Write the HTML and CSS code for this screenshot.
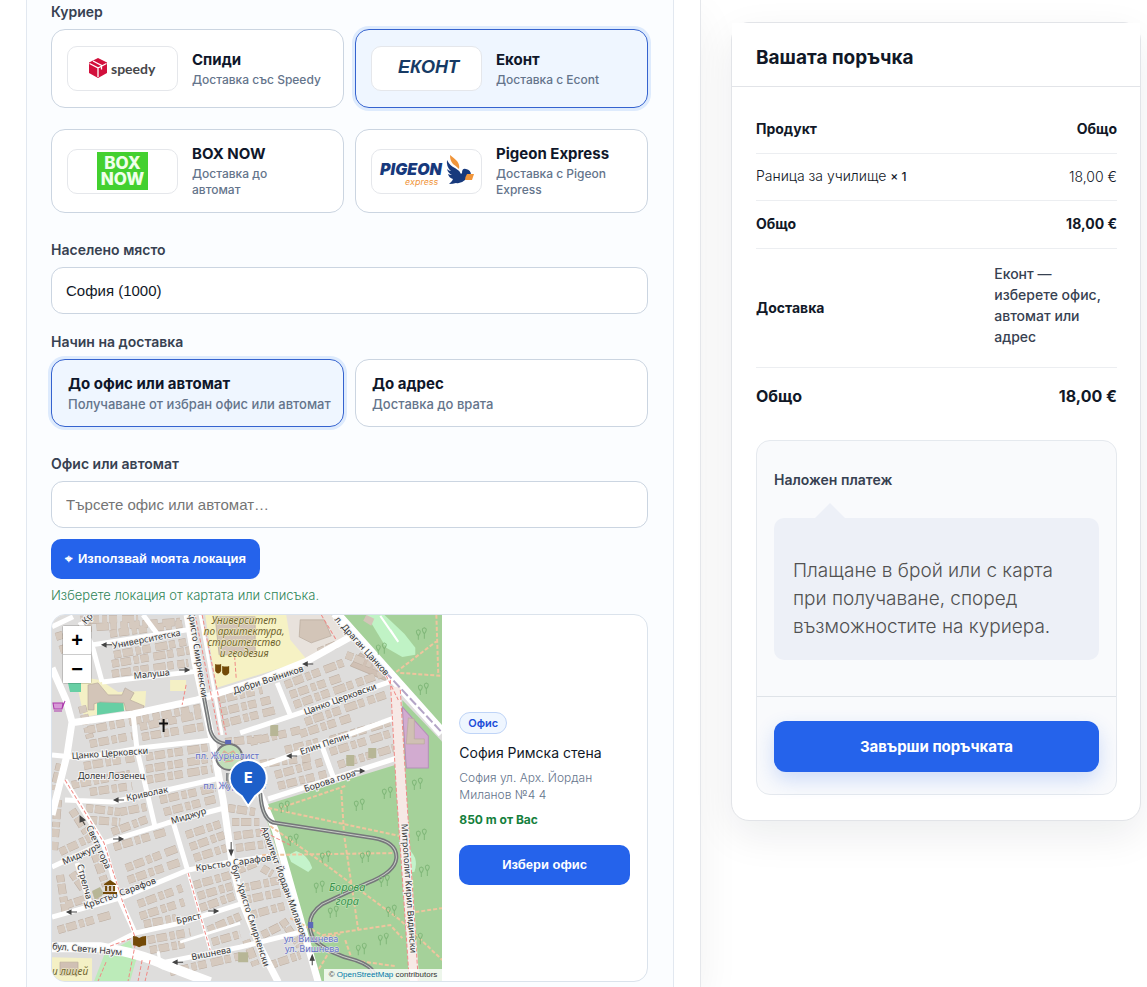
FILE: index.html
```html
<!DOCTYPE html>
<html lang="bg">
<head>
<meta charset="utf-8">
<meta name="viewport" content="width=device-width, initial-scale=1">
<title>Поръчка</title>
<link rel="stylesheet" href="styles.css">
</head>
<body>
<main class="checkout">
  <section class="details">
    <form class="panel">
      <fieldset class="group">
        <legend class="label">Куриер</legend>
        <div class="options options-couriers">
          <label class="option">
            <input class="option-input" type="radio" name="courier">
            <span class="logo">
              <svg width="70" height="24" viewBox="0 0 70 24" aria-hidden="true">
                <path d="M10 1l9 4.500v10.500l-9 5-9-5v-10.500z" fill="#d2103c"/>
                <path d="M1.500 6.500l8.500 4.500v9M10 11l8.500-4.500M5 4l8.500 4.500v4" fill="none" stroke="#fff" stroke-width="1.300"/>
                <text x="23" y="17" class="logo-speedy">speedy</text>
              </svg>
            </span>
            <span class="option-text"><span class="option-title">Спиди</span><span class="option-note">Доставка със Speedy</span></span>
          </label>
          <label class="option">
            <input class="option-input" type="radio" name="courier" checked>
            <span class="logo"><span class="logo-econt">ЕКОНТ</span></span>
            <span class="option-text"><span class="option-title">Еконт</span><span class="option-note">Доставка с Econt</span></span>
          </label>
          <label class="option">
            <input class="option-input" type="radio" name="courier">
            <span class="logo"><span class="logo-boxnow">BOX<br>NOW</span></span>
            <span class="option-text"><span class="option-title">BOX NOW</span><span class="option-note">Доставка до<br>автомат</span></span>
          </label>
          <label class="option">
            <input class="option-input" type="radio" name="courier">
            <span class="logo">
              <svg width="96" height="34" viewBox="0 0 96 34" aria-hidden="true">
                <text x="1" y="21" class="logo-pigeon">PIGEON</text>
                <text x="26" y="31" class="logo-express">express</text>
                <path d="M71 1q4 3 7 6 3 4 2 8-3-3-6-5-3-3-3-9z" fill="#f0953a"/>
                <path d="M68 6q3 6 8 8 4 2 6 6l1-1q0-5 4-4 5 1 5 6-4 2-6 5-4 4-9 3-3 1-7 1l3-3 1-2q-4-1-5-5 2 1 4 1-4-2-5-6 2 2 4 2-5-4-4-11z" fill="#17397c"/>
                <path d="M88 20l7 0-2 6-7 0q0-3 2-6z" fill="#f0953a"/>
              </svg>
            </span>
            <span class="option-text"><span class="option-title">Pigeon Express</span><span class="option-note">Доставка с Pigeon Express</span></span>
          </label>
        </div>
      </fieldset>

      <div class="group">
        <label class="label" for="city">Населено място</label>
        <input class="field" id="city" type="text" value="София (1000)">
      </div>

      <fieldset class="group group-near">
        <legend class="label">Начин на доставка</legend>
        <div class="options">
          <label class="option option-plain">
            <input class="option-input" type="radio" name="method" checked>
            <span class="option-text"><span class="option-title">До офис или автомат</span><span class="option-note">Получаване от избран офис или автомат</span></span>
          </label>
          <label class="option option-plain">
            <input class="option-input" type="radio" name="method">
            <span class="option-text"><span class="option-title">До адрес</span><span class="option-note">Доставка до врата</span></span>
          </label>
        </div>
      </fieldset>

      <div class="group">
        <label class="label" for="office">Офис или автомат</label>
        <input class="field" id="office" type="text" placeholder="Търсете офис или автомат…">
        <button class="button button-locate" type="button"><span class="locate-mark">⌖</span>Използвай моята локация</button>
        <p class="hint">Изберете локация от картата или списъка.</p>
      </div>

      <div class="picker">
        <div class="map">
          <svg class="map-canvas" viewBox="52 615 390 366" preserveAspectRatio="xMidYMid slice" role="img" aria-label="Карта">
            <defs>
              <path id="buildings" d="M56 637L85 628L180 622M60 650L85 641M80 620L138 619M110 634L182 624M112 664L192 650M114 655L186 642M112 674L188 663M82 706L90 738M88 730L200 708M140 727L204 714M90 744L132 736M142 737L206 726M84 766L134 758M146 757L210 747M146 769L214 758M146 780L212 769M72 785L130 774M90 792L132 786M60 764L54 790M58 800L54 850M72 810L90 838M86 808L120 812M120 812L146 807M90 820L120 822M60 852L90 838M112 832L150 818M114 847L165 832M160 800L215 788M164 812L215 799M60 875L66 915M72 873L84 890M95 855L106 886M66 905L118 888M128 880L180 862M126 868L178 848M186 835L220 824M190 847L224 835M194 858L226 848M58 930L110 915M138 904L182 888M140 916L184 902M144 924L176 918M194 885L230 875M198 896L232 886M200 908L234 896M148 940L190 932M150 950L184 944M208 930L240 916M212 942L240 934M170 972L240 956M246 940L256 966M238 870L258 862M242 888L280 880M244 900L282 892M250 915L284 906M262 935L284 924M270 965L300 955M262 868L272 874M282 920L300 946M228 808L255 812M232 822L260 822M234 836L264 832M236 848L266 844M218 700L262 690M220 712L270 700M222 724L276 710M285 685L345 662M294 705L382 674M290 695L340 678M346 655L380 668M225 742L268 738M250 742L300 730M305 722L385 695M300 734L350 718M285 750L318 742M330 740L390 722M330 752L392 733M338 765L394 748M275 775L322 762M278 786L326 774M260 764L310 758M318 652L338 644"/>
            </defs>
            <rect x="52" y="615" width="390" height="366" fill="#dedddc"/>
            <path d="M334 615H442V733Z" fill="#a5d19a"/>
            <path d="M262 806L398 764L442 742V981H320Z" fill="#a5d19a"/>
            <path d="M402 700L442 742V981H410Z" fill="#a5d19a"/>
            <path d="M205 615H330L346 636L306 660L216 688Z" fill="#f6f2c4"/>
            <path d="M286 615H330L346 636L307 660L290 640Z" fill="#e8e2dc"/>
            <path d="M75 676L100 680L118 692L146 691L145 706L84 717Z" fill="#f4f0c5"/>
            <path d="M170 680H186V691H170Z" fill="#f4f0c5"/>
            <path d="M97 702L123 699L124 711L97 715ZM68 683H81V692H70Z" fill="#67cfa4"/>
            <path d="M366 615H384L404 634L415 648L415 655L402 657L386 648Z" fill="#c0f3c5"/>
            <path d="M366 615l8 4-3 7-8-5z" fill="#d3c5b8"/>
            <path d="M380 616l18 26-8-12" fill="none" stroke="#fff" stroke-width="2"/>
            <path d="M402 707L428 736V768H406Z" fill="#d2abd0" stroke="#b48fb8"/>
            <path d="M52 957L92 958V981H52Z" fill="#f4f0c5"/>
            <path d="M104 955L130 940L136 960L130 981H94Z" fill="#bcebb9"/>
            <path d="M288 855L296 851Q308 855 312 868L308 872L291 862Z" fill="#c4f3cb"/>
            <path d="M404 846Q420 856 414 872H406Z" fill="#c4f3cb"/>
            <path d="M88 685l10-2 10 12 14 0 3-7 9 5-4 7 14 6-2 6-16-1-2-8-24-1-6 2v6h-6z M215 617h40v38h-36z M300 620h24l7 16-20 7-12-6z" fill="#d3c5b8" stroke="#b9aa9d" stroke-width=".7"/>
            <path d="M60 962h18v13h-18z M408 718l6 1v20h10v5h-18z M350 666l10-13 20 12 6 16z" fill="#d0c0b4" stroke="#b9aa9d" stroke-width=".7"/>
            <use href="#buildings" class="buildings-edge"/>
            <use href="#buildings" class="buildings"/>
            <path d="M92 891l8-4 4 7-9 6zM270 725h8v11h-8zM346 755h8v11h-8zM368 748h8v10h-8zM238 952h10v10h-10z" fill="#b7b696"/>

            <g class="road">
              <path d="M52 627L73 617M92 645L187 630M102 682L200 671M80 622L92 645L102 682M143 615L157 634M133 714L137 750L155 827M83 758L52 755M83 758L140 748L212 740M240 733L303 712L392 681M277 683L290 715M232 775L270 763L397 717M322 747L333 777M268 799L397 758M65 800L113 802L167 790L220 778M65 780L103 843L120 900L135 933M52 867L103 843L167 823L224 808M173 822L188 872M52 917L123 897L188 870L230 862L277 855M77 863L90 903M107 947L135 933L180 923L243 903M160 963L240 947L300 932"/>
              <path class="road-thin" d="M180 942L240 923M188 873L210 950M200 615L222 735M158 951L160 963"/>
              <path class="road-main" d="M70 723L133 714L197 700L260 680L307 661L352 636M187 615L195 663L212 740L223 800L232 863L240 897L260 947L278 982M258 790L275 830L318 982M52 668L66 700L72 722L67 755L52 815"/>
              <path class="road-wide" d="M52 947L100 947Q140 953 165 965L210 982M335 613L442 733"/>
              <path class="road-wide road-pink" d="M395 687L401 790L414 982"/>
            </g>
            <path d="M385 672L442 733" stroke="#b3a5c6" stroke-width="2" stroke-dasharray="9 3" fill="none"/>
            <path class="paths" d="M268 808L400 836M270 826L330 868L400 920L442 960M341 790L344 836L358 930M262 855L394 853M290 918L322 935L390 925L402 938M345 940L352 960L395 966M396 672L438 640M400 673L442 676M436 615L438 676M415 912L442 908M308 940L340 934M345 786L280 808M330 950L318 970"/>
            <path class="foot" d="M390 680L396 790L409 981M400 690L406 790L418 981M195 615L219 735M202 615L226 735M188 873L210 950M321 615L336 640M234 650L236 678M65 780L104 843L122 900L136 940L128 981M142 960L138 981M186 685L182 705M383 670L398 700M260 830L290 845M110 946L132 938M150 960L145 981M106 962L98 981"/>
            <g class="tram">
              <path class="tram-bed" d="M203 693L210 730Q214 744 228 744M228 773V790M260 793Q262 822 276 823L373 838Q397 842 396 858Q395 872 367 883L322 904Q302 918 314 940Q330 954 355 960Q372 966 374 974"/>
              <path class="tram-rail" d="M203 693L210 730Q214 744 228 744M228 773V790M260 793Q262 822 276 823L373 838Q397 842 396 858Q395 872 367 883L322 904Q302 918 314 940Q330 954 355 960Q372 966 374 974"/>
            </g>
            <circle cx="229" cy="757" r="13" fill="#c2dfb9" stroke="#77777a" stroke-width="2"/>
            <path d="M221 756l3-5 4 3 5-3 4 5-5 5-7 1z" fill="#a5d19a" stroke="#e6a294"/>
            <path d="M225 740h6v4h-6zM308 922h5v6h-5z" fill="#5b68b8"/>

            <g class="trees">
              <path id="tree" d="M378 651q-4-5 0-6 4 1 0 6v4M384 649q-4-5 0-6 4 1 0 6v5"/>
              <use href="#tree" x="40" y="-15"/><use href="#tree" x="42" y="40"/><use href="#tree" x="36" y="135"/>
              <use href="#tree" x="-97" y="158"/><use href="#tree" x="-88" y="191"/><use href="#tree" x="-56" y="208"/><use href="#tree" x="-22" y="156"/><use href="#tree" x="6" y="144"/><use href="#tree" x="-16" y="208"/><use href="#tree" x="3" y="232"/><use href="#tree" x="-62" y="238"/><use href="#tree" x="-48" y="263"/><use href="#tree" x="10" y="262"/><use href="#tree" x="2" y="290"/><use href="#tree" x="40" y="186"/><use href="#tree" x="43" y="222"/><use href="#tree" x="36" y="290"/><use href="#tree" x="-20" y="300"/>
            </g>

            <g class="street">
              <text transform="translate(113 649) rotate(-11)">Университетска</text>
              <text transform="translate(134 679) rotate(-6)">Малуша</text>
              <text transform="translate(188 612) rotate(81)">Христо Смирненски</text>
              <text transform="translate(86 625) rotate(-50)">Кр</text>
              <text transform="translate(234 694) rotate(-18)">Добри Войников</text>
              <text transform="translate(305 715) rotate(-20)">Цанко Церковски</text>
              <text transform="translate(301 755) rotate(-19)">Елин Пелин</text>
              <text transform="translate(305 792) rotate(-18)">Борова гора</text>
              <text transform="translate(334 620) rotate(48)">л. Драган Цанков</text>
              <text transform="translate(72 759) rotate(-4)">Цанко Церковски</text>
              <text transform="translate(127 801) rotate(-12)">Криволак</text>
              <text transform="translate(172 824) rotate(-17)">Миджур</text>
              <text transform="translate(86 827) rotate(65)">Света гора</text>
              <text transform="translate(64 865) rotate(-24)">Миджур</text>
              <text transform="translate(77 865) rotate(75)">Стрелча</text>
              <text transform="translate(85 909) rotate(-20)">Кръстьо Сарафов</text>
              <text transform="translate(196 871) rotate(-8)">Кръстьо Сарафов</text>
              <text transform="translate(177 924) rotate(-13)">Бряст</text>
              <text transform="translate(192 960) rotate(-11)">Вишнева</text>
              <text transform="translate(52 949) rotate(5)">бул. Свети Наум</text>
              <text transform="translate(231 866) rotate(72)">бул. Христо Смирненски</text>
              <text transform="translate(261 828) rotate(70)">Архитект Йордан Миланов</text>
              <text transform="translate(401 824) rotate(86)">Митрополит Кирил Видински</text>
              <text x="78" y="779">Долен Лозенец</text>
            </g>
            <g class="arrows">
              <path id="arrow" d="M102 645h10M106 643l-4 2 4 2z"/>
              <use href="#arrow" x="201" y="19"/><use href="#arrow" x="185" y="111"/><use href="#arrow" x="12" y="155"/><use href="#arrow" x="-35" y="267"/><use href="#arrow" x="71" y="317"/>
              <path id="arrow-right" d="M179 670h10M185 668l4 2-4 2z"/>
              <use href="#arrow-right" x="-66" y="169"/><use href="#arrow-right" x="29" y="241"/><use href="#arrow-right" x="175" y="101"/>
              <path d="M231 842v12M229 850l2 5 2-5zM312 965v-10M310 960l2-5 2 5zM85 825l-5-8M80 822v-6l5 4z"/>
            </g>
            <g class="place">
              <text x="244" y="624">Университет</text><text x="244" y="635">по архитектура,</text><text x="244" y="646">строителство</text><text x="244" y="657">и геодезия</text>
              <text x="70" y="975">и лицей</text>
            </g>
            <g class="park"><text x="347" y="891">Борова</text><text x="347" y="905">гора</text></g>
            <g class="stop"><text x="227" y="759">пл. Журналист</text><text x="235" y="789">пл. Журналист</text><text x="311" y="942">ул. Вишнева</text><text x="312" y="952">ул. Вишнева</text></g>
            <path d="M163.500 719v13M159 723.500h9" stroke="#111" stroke-width="2" fill="none"/>
            <path d="M215 664q3 1 6 0v7q-3 5-6 0zM222 666q4 1 7 0v7q-4 5-7 0zM104 884l6-4 6 4v1h-12zM105 886h2v5h-2zM109 886h2v5h-2zM113 886h2v5h-2zM103 892h14v2h-14zM133 936q4 0 6 2 3-2 7-2v9q-4 0-7 2-3-2-6-2z" fill="#734a08"/>
            <path d="M53 703h10l-1 6h-8zM62 709l3-8M54 711h8" stroke="#ac39ac" stroke-width="1" fill="#d79ad7"/>
            <path d="M241.500 796C235 792 229.500 786 229.500 778.500A18.500 18.500 0 0 1 266.500 778.500C266.500 786 261 792 255 796L248 806Z" fill="#1d5fc9" stroke="#fff" stroke-width="2"/>
            <text x="248" y="783" class="pin">E</text>
          </svg>
          <div class="zoom"><button class="zoom-button" type="button" aria-label="Приближи">+</button><button class="zoom-button" type="button" aria-label="Отдалечи">−</button></div>
          <div class="credit">© <a class="credit-link" href="#">OpenStreetMap</a> contributors</div>
        </div>
        <div class="office">
          <span class="badge">Офис</span>
          <strong class="office-name">София Римска стена</strong>
          <span class="office-address">София ул. Арх. Йордан Миланов №4 4</span>
          <span class="office-distance">850 m от Вас</span>
          <button class="button" type="button">Избери офис</button>
        </div>
      </div>
    </form>
  </section>

  <aside class="order">
    <h2 class="order-title">Вашата поръчка</h2>
    <div class="order-body">
      <table class="totals">
        <thead><tr><th>Продукт</th><th class="amount">Общо</th></tr></thead>
        <tbody>
          <tr class="product"><td>Раница за училище <span class="count">× 1</span></td><td class="amount">18,00 €</td></tr>
          <tr><th>Общо</th><td class="amount strong">18,00 €</td></tr>
          <tr class="shipping"><th>Доставка</th><td class="shipping-value">Еконт — изберете офис, автомат или адрес</td></tr>
          <tr class="grand"><th>Общо</th><td class="amount strong">18,00 €</td></tr>
        </tbody>
      </table>
      <div class="payment">
        <div class="payment-method">
          <p class="payment-label">Наложен платеж</p>
          <p class="payment-note">Плащане в брой или с карта при получаване, според възможностите на куриера.</p>
        </div>
        <div class="payment-action"><button class="button button-order" type="submit">Завърши поръчката</button></div>
      </div>
    </div>
  </aside>
</main>
</body>
</html>
```

FILE: styles.css
```css
* { box-sizing: border-box; }

body {
  margin: 0;
  background: #fff;
  color: #111827;
  font-family: Inter, "Noto Sans", sans-serif;
  font-size: 14px;
  line-height: 20px;
}

.checkout {
  display: grid;
  grid-template-columns: minmax(0, 701fr) minmax(0, 410fr);
  gap: 30px;
  align-items: start;
  min-height: 100vh;
  padding-right: 6px;
  overflow: hidden;
}

.details {
  min-height: 100vh;
  padding: 0 26px;
  border-right: 1px solid #e5e7eb;
  box-shadow: 0 16px 40px rgba(15, 23, 42, .06);
}

.panel {
  min-height: 100vh;
  padding: 2px 25px 4px 24px;
  border: solid #e2e8f0;
  border-width: 0 1px;
  background: #fbfdff;
}

.group { min-width: 0; margin: 0 0 27px; padding: 0; border: 0; }
.group:has(+ .group-near) { margin-bottom: 18px; }
.group:has(+ .picker) { margin-bottom: 9px; }

.label {
  display: block;
  margin: 0 0 7px;
  padding: 0;
  color: #374151;
  font-size: 14px;
  font-weight: 600;
}

.options { display: grid; grid-template-columns: repeat(2, minmax(0, 1fr)); gap: 21px 11px; }

.option {
  display: flex;
  align-items: center;
  gap: 14px;
  min-height: 79px;
  padding: 15px;
  border: 1px solid #cbd5e1;
  border-radius: 14px;
  background: #fff;
}
.options-couriers .option:nth-child(n + 3) { min-height: 84px; padding-block: 13px; }
.option-plain { min-height: 68px; padding: 12px 8px 12px 16px; }
.option:has(:checked) {
  border-color: #3563cf;
  background: #eff6ff;
  box-shadow: 0 0 0 3px #deebfd;
}
.option-input { position: absolute; opacity: 0; }

.option-text { display: flex; flex-direction: column; gap: 2px; min-width: 0; }
.option-title { color: #0f172a; font-size: 15px; font-weight: 700; line-height: 20px; }
.option-note { color: #64748b; font-size: 12px; font-weight: 500; line-height: 16px; }
.option-plain .option-note { font-size: 13px; }

.logo {
  display: flex;
  flex: 0 0 111px;
  align-items: center;
  justify-content: center;
  height: 45px;
  border: 1px solid #e5e7eb;
  border-radius: 10px;
  background: #fff;
}
.logo-speedy { fill: #47474a; font: 700 14px Lato, sans-serif; }
.logo-econt { padding: 0 0 2px 4px; color: #173a64; font: italic 700 18px "Liberation Sans", sans-serif; }
.logo-boxnow {
  width: 51px;
  height: 38px;
  padding-top: 3px;
  background: #43d02f;
  color: #efffea;
  font: 800 17px/16px Inter, sans-serif;
  text-align: center;
}
.logo-pigeon { fill: #17397c; font: italic 900 16px Inter, sans-serif; }
.logo-express { fill: #f0953a; font: italic 400 9px Inter, sans-serif; }

.field {
  display: block;
  width: 100%;
  height: 47px;
  padding: 0 14px;
  border: 1px solid #cbd5e1;
  border-radius: 12px;
  background: #fff;
  color: #111827;
  font: 15px "Liberation Sans", Arial, sans-serif;
}
.field::placeholder { color: #757575; }

.button {
  height: 40px;
  border: 0;
  border-radius: 10px;
  background: #2563eb;
  color: #fff;
  font: 700 13px "Liberation Sans", Arial, sans-serif;
  cursor: pointer;
}
.button-locate { display: block; margin-top: 11px; padding: 0 14px; }
.locate-mark { margin-right: 6px; }

.hint { margin: 6px 0 0; color: #2f8557; font-size: 13px; font-weight: 300; line-height: 20px; }

.picker {
  display: grid;
  grid-template-columns: minmax(0, 391fr) minmax(0, 205fr);
  height: 368px;
  overflow: hidden;
  border: 1px solid #dbe3ec;
  border-radius: 14px;
  background: #fff;
}
.map { position: relative; min-width: 0; height: 366px; overflow: hidden; }
.map-canvas { display: block; width: 100%; height: 100%; }

.road { fill: none; stroke: #fff; stroke-width: 5; stroke-linejoin: round; }
.road-thin { stroke-width: 3; }
.road-main { stroke-width: 7; }
.road-wide { stroke-width: 10; }
.road-pink { stroke: #f7e9e6; }
.buildings, .buildings-edge { fill: none; stroke-dasharray: 7 2 10 3 5 2 8 5 12 2 6 4; }
.buildings { stroke: #d6cabf; stroke-width: 7; }
.buildings-edge { stroke: #bcada1; stroke-width: 8; }
.paths { fill: none; stroke: #efc59e; stroke-width: 2; stroke-dasharray: 4 2; }
.foot { fill: none; stroke: #f08a86; stroke-width: 1; stroke-dasharray: 4 2; }
.tram { fill: none; }
.tram-bed { stroke: #75777a; stroke-width: 4; }
.tram-rail { stroke: #c8cdc7; stroke-width: 1; }
.trees { fill: none; stroke: #80b779; stroke-width: 1; }
.arrows { fill: #444; stroke: #444; stroke-width: 1; }
.street { fill: #333; stroke: #f5f5f5; stroke-width: 2; paint-order: stroke; font: 9px "Noto Sans", sans-serif; }
.place { fill: #6f632f; stroke: #f6f2c4; stroke-width: 1; paint-order: stroke; font: italic 10px "Noto Sans", sans-serif; text-anchor: middle; }
.park { fill: #38914c; stroke: #c5e8bd; stroke-width: 1; paint-order: stroke; font: italic 11px "Noto Sans", sans-serif; text-anchor: middle; }
.stop { fill: #6370c4; stroke: #e9e9ee; stroke-width: 1; paint-order: stroke; font: 9px "Noto Sans", sans-serif; text-anchor: middle; }
.pin { fill: #fff; font: 800 14px Inter, sans-serif; text-anchor: middle; }

.zoom {
  position: absolute;
  top: 11px;
  left: 11px;
  display: grid;
  gap: 1px;
  width: 28px;
  background: #ccc;
  border-radius: 2px;
  box-shadow: 0 0 0 1px rgba(0, 0, 0, .15);
}
.zoom-button { height: 28px; padding: 0; border: 0; background: #fff; color: #000; font: 700 20px/28px "Liberation Sans", sans-serif; }

.credit {
  position: absolute;
  right: 0;
  bottom: 0;
  padding: 0 5px;
  background: rgba(255, 255, 255, .8);
  color: #333;
  font: 8px/12px "Liberation Sans", sans-serif;
}
.credit-link { color: #0078a8; text-decoration: none; }

.office { display: flex; flex-direction: column; justify-content: center; align-items: flex-start; padding: 0 17px; }
.badge {
  padding: 0 8px;
  border: 1px solid #bfd4f7;
  border-radius: 11px;
  background: #eff6ff;
  color: #1d4ed8;
  font-size: 11px;
  font-weight: 600;
}
.office-name { margin-top: 9px; font-size: 14px; font-weight: 400; }
.office-address { margin-top: 6px; color: #64748b; font-size: 12px; font-weight: 300; line-height: 17px; }
.office-distance { margin-top: 7px; color: #15803d; font-size: 12px; font-weight: 700; }
.office .button { width: 100%; margin-top: 15px; }

.order {
  margin-top: 22px;
  border: 1px solid #e2e4e8;
  border-radius: 18px;
  background: #fff;
  box-shadow: 0 14px 40px rgba(15, 23, 42, .08);
}
.order-title {
  margin: 0;
  padding: 23px 24px 16px;
  border-bottom: 1px solid #e2e4e8;
  background: #fff;
  font-size: 19px;
  font-weight: 700;
  line-height: 24px;
}
.order-body { padding: 18px 23px 25px 24px; }

.totals { width: 100%; table-layout: fixed; border-collapse: collapse; }
.totals th, .totals td { height: 48px; padding: 0; border-bottom: 1px solid #eceef1; text-align: left; vertical-align: middle; }
.totals th { width: 66%; font-weight: 700; }
.totals th.amount { width: 34%; }
.totals .amount { text-align: right; }
.totals .strong { font-weight: 700; }
.totals .product td { height: 47px; font-weight: 300; }
.totals .product .count { font-size: 12px; font-weight: 500; }
.totals .shipping td { height: 119px; padding-bottom: 5px; color: #374151; font-weight: 500; line-height: 21px; }
.totals .grand th, .totals .grand td { height: 58px; border: 0; font-size: 16px; }

.payment {
  margin-top: 15px;
  border: 1px solid #e5e9ee;
  border-radius: 14px;
  background: #f9fafc;
}
.payment-method { padding: 29px 17px 36px; border-bottom: 1px solid #dfe3e8; }
.payment-label { margin: 0; color: #374151; font-weight: 600; }
.payment-note {
  position: relative;
  margin: 28px 0 0;
  padding: 39px 19px 19px;
  border-radius: 10px;
  background: #edf0f7;
  color: #515151;
  font-size: 19px;
  font-weight: 300;
  line-height: 28px;
}
.payment-note::before {
  content: "";
  position: absolute;
  top: -15px;
  left: 41px;
  border: solid transparent;
  border-width: 0 15px 15px;
  border-bottom-color: #edf0f7;
}
.payment-action { padding: 24px 17px 22px; }
.button-order {
  width: 100%;
  height: 51px;
  border-radius: 12px;
  box-shadow: 0 8px 20px rgba(37, 99, 235, .2);
  font: 700 15px Inter, sans-serif;
}
```
